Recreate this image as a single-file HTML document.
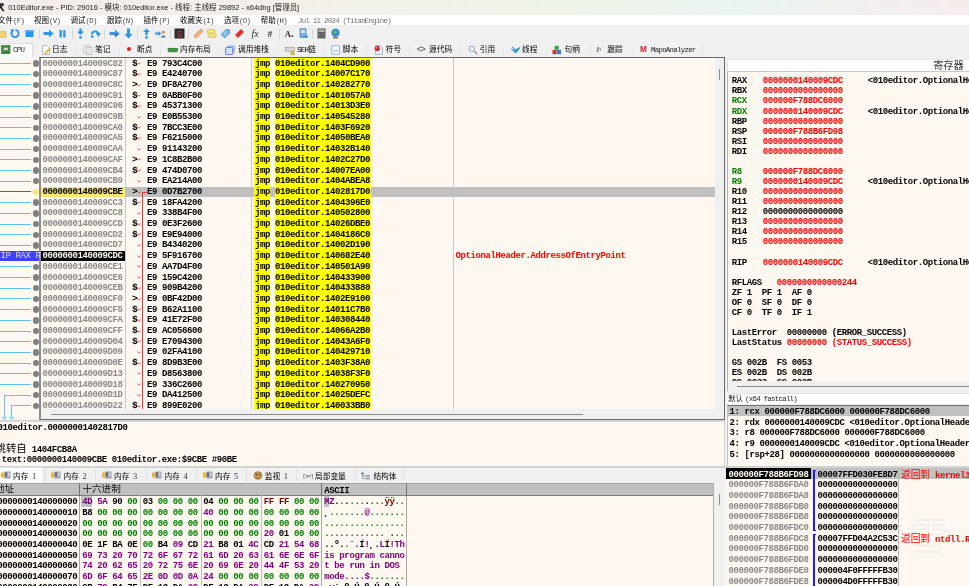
<!DOCTYPE html>
<html lang="zh-CN"><head><meta charset="utf-8"><title>x64dbg</title>
<style>
html,body{margin:0;padding:0;}
body{width:969px;height:586px;overflow:hidden;position:relative;background:#f0f0f0;font-family:"Liberation Sans","Noto Sans CJK SC",sans-serif;}
#root{position:absolute;left:0;top:0;width:969px;height:586px;overflow:hidden;will-change:transform;}
#root div,#root span,#root svg{position:absolute;}
#root span span{position:static;}
span{white-space:pre;line-height:12px;height:12px;}
.m{font-family:"Liberation Mono","DejaVu Sans Mono",monospace;font-size:9.0px;font-weight:bold;color:#000;letter-spacing:-0.4px;}
.g{color:#8a8a8a;}
.r{color:#ff0000;}
.gr{color:#008000;}
.pu{color:#800080;}
.s{font-family:"Liberation Sans","Noto Sans CJK SC",sans-serif;font-size:7.7px;color:#000;}
.ml{font-family:"Liberation Mono",monospace;font-size:7.4px;letter-spacing:-0.72px;}
.dr{color:#800000;}
.sd{font-family:"Liberation Serif",serif;font-size:8.4px;color:#334;margin-left:1.6px;}
.c{font-family:"Liberation Mono","Noto Sans CJK SC",monospace;}
</style></head><body><div id="root">

<div style="left:0.00px;top:0.00px;width:969.00px;height:14.60px;background:linear-gradient(90deg,#f4ece8 0%,#f3f0ea 30%,#eef4e8 58%,#eaf4f0 78%,#f3eeee 92%,#f7ecec 100%);"></div>
<svg style="left:-5px;top:2px" width="10" height="10" viewBox="0 0 10 10"><path d="M5 1 L8 9 M8 1 L5 5 L9 9 M6 3 H9" stroke="#222" stroke-width="1.3" fill="none"/></svg>
<span class="s" style="left:8.20px;top:1.60px;font-size:7.47px;color:#1a1a1a">010Editor.exe - PID: 29016 - 模块: 010editor.exe - 线程: 主线程 29892 - x64dbg [管理员]</span>
<div style="left:0.00px;top:14.60px;width:969.00px;height:10.90px;background:#ffffff;"></div>
<span class="s" style="left:-2.00px;top:14.70px;font-size:7.5px;">文件<span class="ml" style="color:#444">(F)</span></span>
<span class="s" style="left:34.00px;top:14.70px;font-size:7.5px;">视图<span class="ml" style="color:#444">(V)</span></span>
<span class="s" style="left:70.50px;top:14.70px;font-size:7.5px;">调试<span class="ml" style="color:#444">(D)</span></span>
<span class="s" style="left:107.00px;top:14.70px;font-size:7.5px;">跟踪<span class="ml" style="color:#444">(N)</span></span>
<span class="s" style="left:143.50px;top:14.70px;font-size:7.5px;">插件<span class="ml" style="color:#444">(P)</span></span>
<span class="s" style="left:180.00px;top:14.70px;font-size:7.5px;">收藏夹<span class="ml" style="color:#444">(I)</span></span>
<span class="s" style="left:224.00px;top:14.70px;font-size:7.5px;">选项<span class="ml" style="color:#444">(O)</span></span>
<span class="s" style="left:260.80px;top:14.70px;font-size:7.5px;">帮助<span class="ml" style="color:#444">(H)</span></span>
<span class="ml" style="left:298.00px;top:14.70px;color:#707070">Jul 11 2024 (TitanEngine)</span>
<div style="left:0.00px;top:25.50px;width:969.00px;height:16.20px;background:#f0f0f0;"></div>
<div style="left:0.00px;top:41.50px;width:969.00px;height:0.80px;background:#dcdcdc;"></div>
<svg style="left:-4.00px;top:28.10px" width="11" height="11" viewBox="0 0 11 11"><path d="M0 2.5 H4 L5 3.5 H10 V9.5 H0 Z" fill="#f2d27c" stroke="#d8b050" stroke-width="0.6"/></svg>
<svg style="left:10.10px;top:28.10px" width="11" height="11" viewBox="0 0 11 11"><path d="M2.2 3.2 A3.6 3.6 0 1 0 5.5 1.9" stroke="#2a96ee" stroke-width="1.9" fill="none"/><path d="M0.6 1.2 L4.6 1.6 L2.2 5 Z" fill="#2a96ee"/></svg>
<svg style="left:24.10px;top:28.10px" width="11" height="11" viewBox="0 0 11 11"><rect x="1.5" y="2" width="8" height="7" fill="#2a96ee"/><rect x="1.5" y="2" width="8" height="2" fill="#55a8f5"/></svg>
<svg style="left:42.60px;top:28.10px" width="11" height="11" viewBox="0 0 11 11"><path d="M0.5 4 H6 V1.5 L10.5 5.5 L6 9.5 V7 H0.5 Z" fill="#2a96ee"/></svg>
<svg style="left:56.70px;top:28.10px" width="11" height="11" viewBox="0 0 11 11"><rect x="2.5" y="2" width="2.3" height="7.5" fill="#2a96ee"/><rect x="6.2" y="2" width="2.3" height="7.5" fill="#2a96ee"/></svg>
<svg style="left:75.20px;top:28.10px" width="11" height="11" viewBox="0 0 11 11"><path d="M4.3 0.5 H6.7 V3.5 H9 L5.5 7 L2 3.5 H4.3 Z" fill="#2a96ee"/><circle cx="5.5" cy="9.3" r="1.4" fill="#2a96ee"/></svg>
<svg style="left:89.70px;top:28.10px" width="11" height="11" viewBox="0 0 11 11"><path d="M1.8 6.5 A3.4 3.4 0 0 1 8.2 5.2" stroke="#2a96ee" stroke-width="1.9" fill="none"/><path d="M5.6 5 H10.8 L8.6 9 Z" fill="#2a96ee"/><circle cx="2.2" cy="8.6" r="1.4" fill="#2a96ee"/></svg>
<svg style="left:108.50px;top:28.10px" width="11" height="11" viewBox="0 0 11 11"><path d="M0.5 4 H6 V1.5 L10.5 5.5 L6 9.5 V7 H0.5 Z" fill="#3a94ea"/><path d="M0.5 7 H6 V9.5 L10.5 5.5" fill="#1f6fc4"/></svg>
<svg style="left:122.80px;top:28.10px" width="11" height="11" viewBox="0 0 11 11"><path d="M4 0.5 H7 V6 H9.5 L5.5 10.5 L1.5 6 H4 Z" fill="#2a96ee"/></svg>
<svg style="left:141.10px;top:28.10px" width="11" height="11" viewBox="0 0 11 11"><path d="M4.3 7 H6.7 V4 H9 L5.5 0.5 L2 4 H4.3 Z" fill="#2a96ee"/><circle cx="5.5" cy="9.3" r="1.4" fill="#2a96ee"/></svg>
<svg style="left:155.40px;top:28.10px" width="11" height="11" viewBox="0 0 11 11"><path d="M0 4.6 H3.5 V3 L6.3 5.5 L3.5 8 V6.4 H0 Z" fill="#2a96ee"/><circle cx="8.3" cy="4.2" r="1.6" fill="#c8965a"/><path d="M5.8 9.5 Q8.3 5 10.8 9.5 Z" fill="#5a7aa8"/></svg>
<svg style="left:173.70px;top:28.10px" width="11" height="11" viewBox="0 0 11 11"><rect x="0.5" y="0.5" width="10" height="10" fill="#2e2a2a"/><text x="5.5" y="8.6" font-family="Liberation Sans,sans-serif" font-size="8.5" text-anchor="middle" fill="#e04050">S</text></svg>
<svg style="left:192.50px;top:28.10px" width="11" height="11" viewBox="0 0 11 11"><path d="M1.5 7 L7 1.5 A1.8 1.8 0 0 1 9.5 4 L4 9.5 A1.8 1.8 0 0 1 1.5 7 Z" fill="#eeb080" stroke="#d89060" stroke-width="0.6"/></svg>
<svg style="left:206.30px;top:28.10px" width="11" height="11" viewBox="0 0 11 11"><rect x="1" y="1.5" width="8" height="3.6" rx="0.8" fill="#f4e48c" stroke="#d0b040" stroke-width="0.6"/><rect x="2" y="5.8" width="8" height="3.6" rx="0.8" fill="#f4e48c" stroke="#d0b040" stroke-width="0.6"/></svg>
<svg style="left:220.10px;top:28.10px" width="11" height="11" viewBox="0 0 11 11"><path d="M1 6.5 L6 1.5 L9.5 1.8 L9.8 5 L4.8 10 Z" fill="#6ab0e8" stroke="#3a80c0" stroke-width="0.6"/><path d="M3 6.5 L6.5 3 M4.5 8 L8 4.5" stroke="#fff" stroke-width="0.7"/></svg>
<svg style="left:234.10px;top:28.10px" width="11" height="11" viewBox="0 0 11 11"><path d="M1 7 L7 1 L10 4 L4 10 Z" fill="#e03030"/><path d="M1 7 L4 10 L1.5 10.5 Z" fill="#f8d0a0"/></svg>
<span class="s" style="left:251.50px;top:27.60px;font-family:'Liberation Serif',serif;font-size:10px;color:#333"><i>fx</i></span>
<span class="s" style="left:267.50px;top:27.60px;font-family:'Liberation Sans',sans-serif;font-size:8.5px;font-weight:bold;color:#333"><i>#</i></span>
<span class="s" style="left:284.80px;top:27.90px;font-family:'Liberation Serif',serif;font-size:8.5px;font-weight:bold;color:#333">A<span style="font-size:5px">a</span></span>
<svg style="left:297.70px;top:28.10px" width="11" height="11" viewBox="0 0 11 11"><rect x="2" y="0.8" width="6" height="8.5" fill="#7ab0e0" stroke="#3a70b0" stroke-width="0.6"/><rect x="3" y="2" width="4" height="3" fill="#d8e8f8"/><path d="M5 8.5 H10 M8 7 L10 8.5 L8 10" stroke="#2a96ee" stroke-width="1" fill="none"/></svg>
<svg style="left:315.90px;top:28.10px" width="11" height="11" viewBox="0 0 11 11"><rect x="1.5" y="0.5" width="8" height="10" fill="#585858"/><rect x="2.5" y="1.5" width="6" height="2.5" fill="#a8b8a8"/><path d="M2.5 5.5 H8.5 M2.5 7.3 H8.5 M2.5 9.1 H8.5" stroke="#909090" stroke-width="0.9" stroke-dasharray="1.4 0.9"/></svg>
<svg style="left:330.20px;top:28.10px" width="11" height="11" viewBox="0 0 11 11"><circle cx="5.5" cy="4.8" r="4.2" fill="#3a8ae0"/><path d="M3 3 Q5 1.5 6.5 3.2 Q7.5 5 5.5 6 Q3.5 6.5 3 4.8 Z" fill="#58b858"/><rect x="3" y="9.2" width="5" height="1.4" fill="#a06838"/></svg>
<div style="left:38.80px;top:29.00px;width:0.80px;height:9.50px;background:#d6d6d6;"></div>
<div style="left:72.00px;top:29.00px;width:0.80px;height:9.50px;background:#d6d6d6;"></div>
<div style="left:104.00px;top:29.00px;width:0.80px;height:9.50px;background:#d6d6d6;"></div>
<div style="left:137.30px;top:29.00px;width:0.80px;height:9.50px;background:#d6d6d6;"></div>
<div style="left:170.00px;top:29.00px;width:0.80px;height:9.50px;background:#d6d6d6;"></div>
<div style="left:187.60px;top:29.00px;width:0.80px;height:9.50px;background:#d6d6d6;"></div>
<div style="left:278.80px;top:29.00px;width:0.80px;height:9.50px;background:#d6d6d6;"></div>
<div style="left:312.00px;top:29.00px;width:0.80px;height:9.50px;background:#d6d6d6;"></div>
<div style="left:0.00px;top:42.30px;width:969.00px;height:15.00px;background:#f0f0f0;"></div>
<div style="left:-3.00px;top:43.00px;width:36.00px;height:14.30px;background:#fbfbfb;border:1px solid #dedede;border-bottom:none;box-sizing:border-box;"></div>
<svg style="left:0.80px;top:44.70px" width="10" height="10" viewBox="0 0 10 10"><rect x="0.5" y="0.5" width="8.5" height="8" fill="#3c9a3c" stroke="#2a6a2a" stroke-width="0.6"/><rect x="2.2" y="2.2" width="5" height="3.4" fill="#d8d8d8" stroke="#444" stroke-width="0.5"/><path d="M1.5 7.5 H8" stroke="#1a4a1a" stroke-width="0.8" stroke-dasharray="1 0.7"/></svg>
<span class="ml" style="left:13.00px;top:44.30px;color:#222">CPU</span>
<svg style="left:40.50px;top:45.30px" width="10" height="10" viewBox="0 0 10 10"><path d="M1.5 0.5 H6 L8.5 3 V9.5 H1.5 Z" fill="#fafafa" stroke="#9aa" stroke-width="0.7"/><path d="M3.5 8 L8.5 3 L9.5 4 L4.5 9 Z" fill="#e8c040" stroke="#a88020" stroke-width="0.4"/></svg>
<span class="s" style="left:52.00px;top:44.30px;">日志</span>
<svg style="left:82.50px;top:45.30px" width="10" height="10" viewBox="0 0 10 10"><rect x="0.8" y="0.8" width="5.5" height="7" fill="#f4f4f4" stroke="#9aa" stroke-width="0.6"/><rect x="3.2" y="2.4" width="5.8" height="7" fill="#fafafa" stroke="#9aa" stroke-width="0.6"/><path d="M4.2 4.4 H8 M4.2 6 H8 M4.2 7.6 H8" stroke="#c8a8a8" stroke-width="0.5"/></svg>
<span class="s" style="left:95.00px;top:44.30px;">笔记</span>
<div style="left:127.20px;top:47.00px;width:4.00px;height:4.00px;background:#e02020;border-radius:50%"></div>
<span class="s" style="left:137.00px;top:44.30px;">断点</span>
<svg style="left:167.00px;top:45.30px" width="11" height="10" viewBox="0 0 11 10"><rect x="1" y="3.2" width="9.5" height="3.2" fill="#3a9a3a" stroke="#206020" stroke-width="0.5"/><path d="M1.5 7.0 H10" stroke="#206020" stroke-width="0.7" stroke-dasharray="0.8 0.6"/></svg>
<span class="s" style="left:180.00px;top:44.30px;">内存布局</span>
<svg style="left:225.00px;top:45.30px" width="10" height="10" viewBox="0 0 10 10"><rect x="2.8" y="0.6" width="7" height="7" rx="1.2" fill="#b9cdf6" stroke="#7f9fe8" stroke-width="0.6"/><rect x="0.6" y="2.4" width="7.2" height="7.2" rx="1.2" fill="#d4e0fb" stroke="#4a6fe0" stroke-width="0.9"/></svg>
<span class="s" style="left:238.00px;top:44.30px;">调用堆栈</span>
<svg style="left:284.50px;top:45.30px" width="10" height="10" viewBox="0 0 10 10"><rect x="0.5" y="2.2" width="9" height="4" fill="#d8d8d8" stroke="#888" stroke-width="0.5"/><path d="M5.5 9.5 L7.5 5.5 L9.5 9.5 Z" fill="#f0c020" stroke="#a07800" stroke-width="0.4"/></svg>
<span class="s" style="left:297.00px;top:44.30px;"><span class="ml">SEH</span>链</span>
<svg style="left:330.50px;top:45.30px" width="10" height="10" viewBox="0 0 10 10"><rect x="0.8" y="0.8" width="7.6" height="8.4" fill="#f4f8ff" stroke="#7a98c8" stroke-width="0.7"/><text x="4.6" y="6.6" font-size="4" text-anchor="middle" font-family="Liberation Mono,monospace" fill="#555">&lt;&gt;</text></svg>
<span class="s" style="left:342.70px;top:44.30px;">脚本</span>
<svg style="left:373.50px;top:45.30px" width="10" height="10" viewBox="0 0 10 10"><path d="M1.5 0.5 H6 L8.5 3 V9.5 H1.5 Z" fill="#e8eefc" stroke="#9aa" stroke-width="0.7"/><circle cx="3.2" cy="3.4" r="2.6" fill="#d02828"/><circle cx="2.5" cy="2.7" r="0.9" fill="#f8a0a0"/></svg>
<span class="s" style="left:385.80px;top:44.30px;">符号</span>
<span class="ml" style="left:416.80px;top:44.00px;font-size:8.4px;color:#444;letter-spacing:-1.1px">&lt;&gt;</span>
<span class="s" style="left:429.00px;top:44.30px;">源代码</span>
<svg style="left:467.50px;top:45.30px" width="10" height="10" viewBox="0 0 10 10"><circle cx="3.8" cy="3.8" r="2.8" fill="#eef4fa" stroke="#8a98a8" stroke-width="0.9"/><path d="M6 6 L9.3 9.3" stroke="#8a98a8" stroke-width="1.3"/></svg>
<span class="s" style="left:479.80px;top:44.30px;">引用</span>
<svg style="left:510.00px;top:45.30px" width="11" height="10" viewBox="0 0 11 10"><path d="M0.5 3 L5 5 L10.5 1.5 L8 6 L5.5 8.5 L3.5 6.5 Z" fill="#3a9ae8"/><path d="M2 2 L6 5 L9.5 3.5" stroke="#1a6ab8" stroke-width="0.8" fill="none"/></svg>
<span class="s" style="left:522.00px;top:44.30px;">线程</span>
<svg style="left:552.30px;top:45.30px" width="10" height="10" viewBox="0 0 10 10"><rect x="0.5" y="5" width="4" height="4.2" fill="#d03030"/><rect x="4.8" y="5" width="4.2" height="4.2" fill="#3a78d8"/><rect x="2.6" y="0.8" width="4.2" height="4" fill="#38a838"/></svg>
<span class="s" style="left:564.50px;top:44.30px;">句柄</span>
<span class="ml" style="left:596.50px;top:43.80px;font-size:7px;color:#555;font-family:'DejaVu Sans',sans-serif">ℓ<span style="font-size:4px;vertical-align:top">3</span></span>
<span class="s" style="left:607.20px;top:44.30px;">跟踪</span>
<span class="s" style="left:640.00px;top:44.30px;font-weight:bold;color:#e02020;font-size:8.2px">M</span>
<span class="ml" style="left:651.00px;top:44.30px;color:#222">MapoAnalyzer</span>
<div style="left:33.00px;top:44.50px;width:0.70px;height:11.50px;background:#e6e6e6;"></div>
<div style="left:74.50px;top:44.50px;width:0.70px;height:11.50px;background:#e6e6e6;"></div>
<div style="left:119.00px;top:44.50px;width:0.70px;height:11.50px;background:#e6e6e6;"></div>
<div style="left:160.00px;top:44.50px;width:0.70px;height:11.50px;background:#e6e6e6;"></div>
<div style="left:218.00px;top:44.50px;width:0.70px;height:11.50px;background:#e6e6e6;"></div>
<div style="left:277.00px;top:44.50px;width:0.70px;height:11.50px;background:#e6e6e6;"></div>
<div style="left:323.00px;top:44.50px;width:0.70px;height:11.50px;background:#e6e6e6;"></div>
<div style="left:366.00px;top:44.50px;width:0.70px;height:11.50px;background:#e6e6e6;"></div>
<div style="left:408.50px;top:44.50px;width:0.70px;height:11.50px;background:#e6e6e6;"></div>
<div style="left:459.00px;top:44.50px;width:0.70px;height:11.50px;background:#e6e6e6;"></div>
<div style="left:503.00px;top:44.50px;width:0.70px;height:11.50px;background:#e6e6e6;"></div>
<div style="left:546.00px;top:44.50px;width:0.70px;height:11.50px;background:#e6e6e6;"></div>
<div style="left:590.00px;top:44.50px;width:0.70px;height:11.50px;background:#e6e6e6;"></div>
<div style="left:631.50px;top:44.50px;width:0.70px;height:11.50px;background:#e6e6e6;"></div>
<div style="left:702.30px;top:44.50px;width:0.70px;height:11.50px;background:#e6e6e6;"></div>
<div style="left:0.00px;top:57.30px;width:39.00px;height:362.00px;background:#fff8f0;"></div>
<div style="left:38.50px;top:57.20px;width:686.60px;height:362.40px;background:#fff8f0;border:1px solid #686868;border-left:2.1px solid #8e8e8e;box-sizing:border-box;"></div>
<div style="left:125.20px;top:58.20px;width:0.80px;height:351.00px;background:#c8c8c8;"></div>
<div style="left:250.60px;top:58.20px;width:0.80px;height:351.00px;background:#c8c8c8;"></div>
<div style="left:453.30px;top:58.20px;width:0.80px;height:351.00px;background:#c8c8c8;"></div>
<div style="left:40.60px;top:186.57px;width:674.00px;height:10.70px;background:#c0c0c0;"></div>
<div style="left:40.60px;top:186.57px;width:84.60px;height:10.70px;background:#ffe66e;"></div>
<div style="left:40.60px;top:250.77px;width:84.60px;height:10.70px;background:#000000;"></div>
<div style="left:0.00px;top:63.02px;width:31.30px;height:1.00px;background:#5cc6f2;"></div>
<div style="left:32.50px;top:60.32px;width:6.40px;height:6.40px;background:#808080;border-radius:50%"></div>
<div style="left:0.00px;top:73.72px;width:31.30px;height:1.00px;background:#5cc6f2;"></div>
<div style="left:32.50px;top:71.02px;width:6.40px;height:6.40px;background:#808080;border-radius:50%"></div>
<div style="left:0.00px;top:84.42px;width:31.30px;height:1.00px;background:#5cc6f2;"></div>
<div style="left:32.50px;top:81.72px;width:6.40px;height:6.40px;background:#808080;border-radius:50%"></div>
<div style="left:0.00px;top:95.12px;width:31.30px;height:1.00px;background:#5cc6f2;"></div>
<div style="left:32.50px;top:92.42px;width:6.40px;height:6.40px;background:#808080;border-radius:50%"></div>
<div style="left:0.00px;top:105.82px;width:31.30px;height:1.00px;background:#5cc6f2;"></div>
<div style="left:32.50px;top:103.12px;width:6.40px;height:6.40px;background:#808080;border-radius:50%"></div>
<div style="left:0.00px;top:116.52px;width:31.30px;height:1.00px;background:#5cc6f2;"></div>
<div style="left:32.50px;top:113.82px;width:6.40px;height:6.40px;background:#808080;border-radius:50%"></div>
<div style="left:0.00px;top:127.22px;width:31.30px;height:1.00px;background:#5cc6f2;"></div>
<div style="left:32.50px;top:124.52px;width:6.40px;height:6.40px;background:#808080;border-radius:50%"></div>
<div style="left:0.00px;top:137.92px;width:31.30px;height:1.00px;background:#5cc6f2;"></div>
<div style="left:32.50px;top:135.22px;width:6.40px;height:6.40px;background:#808080;border-radius:50%"></div>
<div style="left:0.00px;top:148.62px;width:31.30px;height:1.00px;background:#5cc6f2;"></div>
<div style="left:32.50px;top:145.92px;width:6.40px;height:6.40px;background:#808080;border-radius:50%"></div>
<div style="left:0.00px;top:159.32px;width:31.30px;height:1.00px;background:#5cc6f2;"></div>
<div style="left:32.50px;top:156.62px;width:6.40px;height:6.40px;background:#808080;border-radius:50%"></div>
<div style="left:0.00px;top:170.02px;width:31.30px;height:1.00px;background:#5cc6f2;"></div>
<div style="left:32.50px;top:167.32px;width:6.40px;height:6.40px;background:#808080;border-radius:50%"></div>
<div style="left:0.00px;top:180.72px;width:31.30px;height:1.00px;background:#5cc6f2;"></div>
<div style="left:32.50px;top:178.02px;width:6.40px;height:6.40px;background:#808080;border-radius:50%"></div>
<div style="left:0.00px;top:191.42px;width:31.30px;height:1.00px;background:#ff2020;"></div>
<div style="left:32.50px;top:188.72px;width:6.40px;height:6.40px;background:#ffe680;border-radius:50%"></div>
<div style="left:0.00px;top:202.12px;width:31.30px;height:1.00px;background:#5cc6f2;"></div>
<div style="left:32.50px;top:199.42px;width:6.40px;height:6.40px;background:#808080;border-radius:50%"></div>
<div style="left:0.00px;top:212.82px;width:31.30px;height:1.00px;background:#5cc6f2;"></div>
<div style="left:32.50px;top:210.12px;width:6.40px;height:6.40px;background:#808080;border-radius:50%"></div>
<div style="left:0.00px;top:223.52px;width:31.30px;height:1.00px;background:#5cc6f2;"></div>
<div style="left:32.50px;top:220.82px;width:6.40px;height:6.40px;background:#808080;border-radius:50%"></div>
<div style="left:0.00px;top:234.22px;width:31.30px;height:1.00px;background:#5cc6f2;"></div>
<div style="left:32.50px;top:231.52px;width:6.40px;height:6.40px;background:#808080;border-radius:50%"></div>
<div style="left:0.00px;top:244.92px;width:31.30px;height:1.00px;background:#5cc6f2;"></div>
<div style="left:32.50px;top:242.22px;width:6.40px;height:6.40px;background:#808080;border-radius:50%"></div>
<div style="left:0.00px;top:251.07px;width:38.60px;height:10.10px;background:#4040ff;"></div>
<span class="m" style="left:0.50px;top:250.12px;color:#dcdcff;font-weight:normal">IP RAX R</span>
<div style="left:0.00px;top:266.32px;width:31.30px;height:1.00px;background:#5cc6f2;"></div>
<div style="left:32.50px;top:263.62px;width:6.40px;height:6.40px;background:#808080;border-radius:50%"></div>
<div style="left:0.00px;top:277.02px;width:31.30px;height:1.00px;background:#5cc6f2;"></div>
<div style="left:32.50px;top:274.32px;width:6.40px;height:6.40px;background:#808080;border-radius:50%"></div>
<div style="left:0.00px;top:287.72px;width:31.30px;height:1.00px;background:#5cc6f2;"></div>
<div style="left:32.50px;top:285.02px;width:6.40px;height:6.40px;background:#808080;border-radius:50%"></div>
<div style="left:0.00px;top:298.42px;width:31.30px;height:1.00px;background:#5cc6f2;"></div>
<div style="left:32.50px;top:295.72px;width:6.40px;height:6.40px;background:#808080;border-radius:50%"></div>
<div style="left:0.00px;top:309.12px;width:31.30px;height:1.00px;background:#5cc6f2;"></div>
<div style="left:32.50px;top:306.42px;width:6.40px;height:6.40px;background:#808080;border-radius:50%"></div>
<div style="left:0.00px;top:319.82px;width:31.30px;height:1.00px;background:#5cc6f2;"></div>
<div style="left:32.50px;top:317.12px;width:6.40px;height:6.40px;background:#808080;border-radius:50%"></div>
<div style="left:0.00px;top:330.52px;width:31.30px;height:1.00px;background:#5cc6f2;"></div>
<div style="left:32.50px;top:327.82px;width:6.40px;height:6.40px;background:#808080;border-radius:50%"></div>
<div style="left:0.00px;top:341.22px;width:31.30px;height:1.00px;background:#5cc6f2;"></div>
<div style="left:32.50px;top:338.52px;width:6.40px;height:6.40px;background:#808080;border-radius:50%"></div>
<div style="left:0.00px;top:351.92px;width:31.30px;height:1.00px;background:#5cc6f2;"></div>
<div style="left:32.50px;top:349.22px;width:6.40px;height:6.40px;background:#808080;border-radius:50%"></div>
<div style="left:0.00px;top:362.62px;width:31.30px;height:1.00px;background:#5cc6f2;"></div>
<div style="left:32.50px;top:359.92px;width:6.40px;height:6.40px;background:#808080;border-radius:50%"></div>
<div style="left:0.00px;top:373.32px;width:31.30px;height:1.00px;background:#5cc6f2;"></div>
<div style="left:32.50px;top:370.62px;width:6.40px;height:6.40px;background:#808080;border-radius:50%"></div>
<div style="left:0.00px;top:384.02px;width:31.30px;height:1.00px;background:#5cc6f2;"></div>
<div style="left:32.50px;top:381.32px;width:6.40px;height:6.40px;background:#808080;border-radius:50%"></div>
<div style="left:4.50px;top:394.72px;width:26.80px;height:1.00px;background:#5cc6f2;"></div>
<div style="left:32.50px;top:392.02px;width:6.40px;height:6.40px;background:#808080;border-radius:50%"></div>
<div style="left:11.50px;top:405.42px;width:19.80px;height:1.00px;background:#5cc6f2;"></div>
<div style="left:32.50px;top:402.72px;width:6.40px;height:6.40px;background:#808080;border-radius:50%"></div>
<div style="left:3.90px;top:394.62px;width:1.50px;height:23.38px;background:#5cc6f2;"></div>
<div style="left:10.90px;top:405.32px;width:1.50px;height:12.68px;background:#5cc6f2;"></div>
<svg style="left:1.1px;top:415.8px" width="14" height="4" viewBox="0 0 14 4"><path d="M1.2 0.8 L3.5 3.4 L5.8 0.8 M8.2 0.8 L10.5 3.4 L12.8 0.8" stroke="#5cc6f2" stroke-width="1" fill="none"/></svg>
<div style="left:142.00px;top:191.92px;width:0.90px;height:217.08px;background:#ff3030;"></div>
<div style="left:142.00px;top:191.52px;width:4.50px;height:0.90px;background:#ff3030;"></div>
<div style="left:254.30px;top:58.17px;width:15.70px;height:10.90px;background:#ffff00;"></div>
<div style="left:274.70px;top:58.17px;width:96.30px;height:10.90px;background:#ffff00;"></div>
<div style="left:254.30px;top:68.87px;width:15.70px;height:10.90px;background:#ffff00;"></div>
<div style="left:274.70px;top:68.87px;width:96.30px;height:10.90px;background:#ffff00;"></div>
<div style="left:254.30px;top:79.57px;width:15.70px;height:10.90px;background:#ffff00;"></div>
<div style="left:274.70px;top:79.57px;width:96.30px;height:10.90px;background:#ffff00;"></div>
<div style="left:254.30px;top:90.27px;width:15.70px;height:10.90px;background:#ffff00;"></div>
<div style="left:274.70px;top:90.27px;width:96.30px;height:10.90px;background:#ffff00;"></div>
<div style="left:254.30px;top:100.97px;width:15.70px;height:10.90px;background:#ffff00;"></div>
<div style="left:274.70px;top:100.97px;width:96.30px;height:10.90px;background:#ffff00;"></div>
<div style="left:254.30px;top:111.67px;width:15.70px;height:10.90px;background:#ffff00;"></div>
<div style="left:274.70px;top:111.67px;width:96.30px;height:10.90px;background:#ffff00;"></div>
<div style="left:254.30px;top:122.37px;width:15.70px;height:10.90px;background:#ffff00;"></div>
<div style="left:274.70px;top:122.37px;width:96.30px;height:10.90px;background:#ffff00;"></div>
<div style="left:254.30px;top:133.07px;width:15.70px;height:10.90px;background:#ffff00;"></div>
<div style="left:274.70px;top:133.07px;width:96.30px;height:10.90px;background:#ffff00;"></div>
<div style="left:254.30px;top:143.77px;width:15.70px;height:10.90px;background:#ffff00;"></div>
<div style="left:274.70px;top:143.77px;width:96.30px;height:10.90px;background:#ffff00;"></div>
<div style="left:254.30px;top:154.47px;width:15.70px;height:10.90px;background:#ffff00;"></div>
<div style="left:274.70px;top:154.47px;width:96.30px;height:10.90px;background:#ffff00;"></div>
<div style="left:254.30px;top:165.17px;width:15.70px;height:10.90px;background:#ffff00;"></div>
<div style="left:274.70px;top:165.17px;width:96.30px;height:10.90px;background:#ffff00;"></div>
<div style="left:254.30px;top:175.87px;width:15.70px;height:10.90px;background:#ffff00;"></div>
<div style="left:274.70px;top:175.87px;width:96.30px;height:10.90px;background:#ffff00;"></div>
<div style="left:254.30px;top:186.57px;width:15.70px;height:10.90px;background:#ffff00;"></div>
<div style="left:274.70px;top:186.57px;width:96.30px;height:10.90px;background:#ffff00;"></div>
<div style="left:254.30px;top:197.27px;width:15.70px;height:10.90px;background:#ffff00;"></div>
<div style="left:274.70px;top:197.27px;width:96.30px;height:10.90px;background:#ffff00;"></div>
<div style="left:254.30px;top:207.97px;width:15.70px;height:10.90px;background:#ffff00;"></div>
<div style="left:274.70px;top:207.97px;width:96.30px;height:10.90px;background:#ffff00;"></div>
<div style="left:254.30px;top:218.67px;width:15.70px;height:10.90px;background:#ffff00;"></div>
<div style="left:274.70px;top:218.67px;width:96.30px;height:10.90px;background:#ffff00;"></div>
<div style="left:254.30px;top:229.37px;width:15.70px;height:10.90px;background:#ffff00;"></div>
<div style="left:274.70px;top:229.37px;width:96.30px;height:10.90px;background:#ffff00;"></div>
<div style="left:254.30px;top:240.07px;width:15.70px;height:10.90px;background:#ffff00;"></div>
<div style="left:274.70px;top:240.07px;width:96.30px;height:10.90px;background:#ffff00;"></div>
<div style="left:254.30px;top:250.77px;width:15.70px;height:10.90px;background:#ffff00;"></div>
<div style="left:274.70px;top:250.77px;width:96.30px;height:10.90px;background:#ffff00;"></div>
<div style="left:254.30px;top:261.47px;width:15.70px;height:10.90px;background:#ffff00;"></div>
<div style="left:274.70px;top:261.47px;width:96.30px;height:10.90px;background:#ffff00;"></div>
<div style="left:254.30px;top:272.17px;width:15.70px;height:10.90px;background:#ffff00;"></div>
<div style="left:274.70px;top:272.17px;width:96.30px;height:10.90px;background:#ffff00;"></div>
<div style="left:254.30px;top:282.87px;width:15.70px;height:10.90px;background:#ffff00;"></div>
<div style="left:274.70px;top:282.87px;width:96.30px;height:10.90px;background:#ffff00;"></div>
<div style="left:254.30px;top:293.57px;width:15.70px;height:10.90px;background:#ffff00;"></div>
<div style="left:274.70px;top:293.57px;width:96.30px;height:10.90px;background:#ffff00;"></div>
<div style="left:254.30px;top:304.27px;width:15.70px;height:10.90px;background:#ffff00;"></div>
<div style="left:274.70px;top:304.27px;width:96.30px;height:10.90px;background:#ffff00;"></div>
<div style="left:254.30px;top:314.97px;width:15.70px;height:10.90px;background:#ffff00;"></div>
<div style="left:274.70px;top:314.97px;width:96.30px;height:10.90px;background:#ffff00;"></div>
<div style="left:254.30px;top:325.67px;width:15.70px;height:10.90px;background:#ffff00;"></div>
<div style="left:274.70px;top:325.67px;width:96.30px;height:10.90px;background:#ffff00;"></div>
<div style="left:254.30px;top:336.37px;width:15.70px;height:10.90px;background:#ffff00;"></div>
<div style="left:274.70px;top:336.37px;width:96.30px;height:10.90px;background:#ffff00;"></div>
<div style="left:254.30px;top:347.07px;width:15.70px;height:10.90px;background:#ffff00;"></div>
<div style="left:274.70px;top:347.07px;width:96.30px;height:10.90px;background:#ffff00;"></div>
<div style="left:254.30px;top:357.77px;width:15.70px;height:10.90px;background:#ffff00;"></div>
<div style="left:274.70px;top:357.77px;width:96.30px;height:10.90px;background:#ffff00;"></div>
<div style="left:254.30px;top:368.47px;width:15.70px;height:10.90px;background:#ffff00;"></div>
<div style="left:274.70px;top:368.47px;width:96.30px;height:10.90px;background:#ffff00;"></div>
<div style="left:254.30px;top:379.17px;width:15.70px;height:10.90px;background:#ffff00;"></div>
<div style="left:274.70px;top:379.17px;width:96.30px;height:10.90px;background:#ffff00;"></div>
<div style="left:254.30px;top:389.87px;width:15.70px;height:10.90px;background:#ffff00;"></div>
<div style="left:274.70px;top:389.87px;width:96.30px;height:10.90px;background:#ffff00;"></div>
<div style="left:254.30px;top:400.57px;width:15.70px;height:10.90px;background:#ffff00;"></div>
<div style="left:274.70px;top:400.57px;width:96.30px;height:10.90px;background:#ffff00;"></div>
<span class="m g" style="left:42.60px;top:57.52px;">0000000140009C82</span>
<span class="m" style="left:132.00px;top:57.52px;font-size:9.6px">$</span>
<svg style="left:136.8px;top:62.12px" width="4" height="3" viewBox="0 0 4 3"><path d="M0.4 0.4 L2 2.2 L3.6 0.4" stroke="#ff3030" stroke-width="0.8" fill="none"/></svg>
<span class="m" style="left:147.00px;top:57.52px;">E9 793C4C00</span>
<span class="m" style="left:255.00px;top:57.52px;">jmp 010editor.1404CD900</span>
<span class="m g" style="left:42.60px;top:68.22px;">0000000140009C87</span>
<span class="m" style="left:132.00px;top:68.22px;font-size:9.6px">$</span>
<svg style="left:136.8px;top:72.82px" width="4" height="3" viewBox="0 0 4 3"><path d="M0.4 0.4 L2 2.2 L3.6 0.4" stroke="#ff3030" stroke-width="0.8" fill="none"/></svg>
<span class="m" style="left:147.00px;top:68.22px;">E9 E4240700</span>
<span class="m" style="left:255.00px;top:68.22px;">jmp 010editor.14007C170</span>
<span class="m g" style="left:42.60px;top:78.92px;">0000000140009C8C</span>
<span class="m" style="left:132.00px;top:78.92px;font-size:9.6px">&gt;</span>
<svg style="left:136.8px;top:83.52px" width="4" height="3" viewBox="0 0 4 3"><path d="M0.4 0.4 L2 2.2 L3.6 0.4" stroke="#ff3030" stroke-width="0.8" fill="none"/></svg>
<span class="m" style="left:147.00px;top:78.92px;">E9 DF8A2700</span>
<span class="m" style="left:255.00px;top:78.92px;">jmp 010editor.140282770</span>
<span class="m g" style="left:42.60px;top:89.62px;">0000000140009C91</span>
<span class="m" style="left:132.00px;top:89.62px;font-size:9.6px">$</span>
<svg style="left:136.8px;top:94.22px" width="4" height="3" viewBox="0 0 4 3"><path d="M0.4 0.4 L2 2.2 L3.6 0.4" stroke="#ff3030" stroke-width="0.8" fill="none"/></svg>
<span class="m" style="left:147.00px;top:89.62px;">E9 0ABB0F00</span>
<span class="m" style="left:255.00px;top:89.62px;">jmp 010editor.1401057A0</span>
<span class="m g" style="left:42.60px;top:100.32px;">0000000140009C96</span>
<span class="m" style="left:132.00px;top:100.32px;font-size:9.6px">$</span>
<svg style="left:136.8px;top:104.92px" width="4" height="3" viewBox="0 0 4 3"><path d="M0.4 0.4 L2 2.2 L3.6 0.4" stroke="#ff3030" stroke-width="0.8" fill="none"/></svg>
<span class="m" style="left:147.00px;top:100.32px;">E9 45371300</span>
<span class="m" style="left:255.00px;top:100.32px;">jmp 010editor.14013D3E0</span>
<span class="m g" style="left:42.60px;top:111.02px;">0000000140009C9B</span>
<svg style="left:136.8px;top:115.62px" width="4" height="3" viewBox="0 0 4 3"><path d="M0.4 0.4 L2 2.2 L3.6 0.4" stroke="#ff3030" stroke-width="0.8" fill="none"/></svg>
<span class="m" style="left:147.00px;top:111.02px;">E9 E0B55300</span>
<span class="m" style="left:255.00px;top:111.02px;">jmp 010editor.140545280</span>
<span class="m g" style="left:42.60px;top:121.72px;">0000000140009CA0</span>
<span class="m" style="left:132.00px;top:121.72px;font-size:9.6px">$</span>
<svg style="left:136.8px;top:126.32px" width="4" height="3" viewBox="0 0 4 3"><path d="M0.4 0.4 L2 2.2 L3.6 0.4" stroke="#ff3030" stroke-width="0.8" fill="none"/></svg>
<span class="m" style="left:147.00px;top:121.72px;">E9 7BCC3E00</span>
<span class="m" style="left:255.00px;top:121.72px;">jmp 010editor.1403F6920</span>
<span class="m g" style="left:42.60px;top:132.42px;">0000000140009CA5</span>
<span class="m" style="left:132.00px;top:132.42px;font-size:9.6px">$</span>
<svg style="left:136.8px;top:137.02px" width="4" height="3" viewBox="0 0 4 3"><path d="M0.4 0.4 L2 2.2 L3.6 0.4" stroke="#ff3030" stroke-width="0.8" fill="none"/></svg>
<span class="m" style="left:147.00px;top:132.42px;">E9 F6215000</span>
<span class="m" style="left:255.00px;top:132.42px;">jmp 010editor.14050BEA0</span>
<span class="m g" style="left:42.60px;top:143.12px;">0000000140009CAA</span>
<svg style="left:136.8px;top:147.72px" width="4" height="3" viewBox="0 0 4 3"><path d="M0.4 0.4 L2 2.2 L3.6 0.4" stroke="#ff3030" stroke-width="0.8" fill="none"/></svg>
<span class="m" style="left:147.00px;top:143.12px;">E9 91143200</span>
<span class="m" style="left:255.00px;top:143.12px;">jmp 010editor.14032B140</span>
<span class="m g" style="left:42.60px;top:153.82px;">0000000140009CAF</span>
<span class="m" style="left:132.00px;top:153.82px;font-size:9.6px">&gt;</span>
<svg style="left:136.8px;top:158.42px" width="4" height="3" viewBox="0 0 4 3"><path d="M0.4 0.4 L2 2.2 L3.6 0.4" stroke="#ff3030" stroke-width="0.8" fill="none"/></svg>
<span class="m" style="left:147.00px;top:153.82px;">E9 1C8B2B00</span>
<span class="m" style="left:255.00px;top:153.82px;">jmp 010editor.1402C27D0</span>
<span class="m g" style="left:42.60px;top:164.52px;">0000000140009CB4</span>
<span class="m" style="left:132.00px;top:164.52px;font-size:9.6px">$</span>
<svg style="left:136.8px;top:169.12px" width="4" height="3" viewBox="0 0 4 3"><path d="M0.4 0.4 L2 2.2 L3.6 0.4" stroke="#ff3030" stroke-width="0.8" fill="none"/></svg>
<span class="m" style="left:147.00px;top:164.52px;">E9 474D0700</span>
<span class="m" style="left:255.00px;top:164.52px;">jmp 010editor.14007EA00</span>
<span class="m g" style="left:42.60px;top:175.22px;">0000000140009CB9</span>
<svg style="left:136.8px;top:179.82px" width="4" height="3" viewBox="0 0 4 3"><path d="M0.4 0.4 L2 2.2 L3.6 0.4" stroke="#ff3030" stroke-width="0.8" fill="none"/></svg>
<span class="m" style="left:147.00px;top:175.22px;">E9 EA214A00</span>
<span class="m" style="left:255.00px;top:175.22px;">jmp 010editor.1404ABEA8</span>
<span class="m" style="left:42.60px;top:185.92px;">0000000140009CBE</span>
<span class="m" style="left:132.00px;top:185.92px;font-size:9.6px">&gt;</span>
<svg style="left:136.8px;top:190.52px" width="4" height="3" viewBox="0 0 4 3"><path d="M0.4 0.4 L2 2.2 L3.6 0.4" stroke="#ff3030" stroke-width="0.8" fill="none"/></svg>
<span class="m" style="left:147.00px;top:185.92px;">E9 0D7B2700</span>
<span class="m" style="left:255.00px;top:185.92px;">jmp 010editor.1402817D0</span>
<span class="m g" style="left:42.60px;top:196.62px;">0000000140009CC3</span>
<span class="m" style="left:132.00px;top:196.62px;font-size:9.6px">$</span>
<svg style="left:136.8px;top:201.22px" width="4" height="3" viewBox="0 0 4 3"><path d="M0.4 0.4 L2 2.2 L3.6 0.4" stroke="#ff3030" stroke-width="0.8" fill="none"/></svg>
<span class="m" style="left:147.00px;top:196.62px;">E9 18FA4200</span>
<span class="m" style="left:255.00px;top:196.62px;">jmp 010editor.1404396E0</span>
<span class="m g" style="left:42.60px;top:207.32px;">0000000140009CC8</span>
<svg style="left:136.8px;top:211.92px" width="4" height="3" viewBox="0 0 4 3"><path d="M0.4 0.4 L2 2.2 L3.6 0.4" stroke="#ff3030" stroke-width="0.8" fill="none"/></svg>
<span class="m" style="left:147.00px;top:207.32px;">E9 338B4F00</span>
<span class="m" style="left:255.00px;top:207.32px;">jmp 010editor.140502800</span>
<span class="m g" style="left:42.60px;top:218.02px;">0000000140009CCD</span>
<span class="m" style="left:132.00px;top:218.02px;font-size:9.6px">$</span>
<svg style="left:136.8px;top:222.62px" width="4" height="3" viewBox="0 0 4 3"><path d="M0.4 0.4 L2 2.2 L3.6 0.4" stroke="#ff3030" stroke-width="0.8" fill="none"/></svg>
<span class="m" style="left:147.00px;top:218.02px;">E9 0E3F2600</span>
<span class="m" style="left:255.00px;top:218.02px;">jmp 010editor.14026DBE0</span>
<span class="m g" style="left:42.60px;top:228.72px;">0000000140009CD2</span>
<span class="m" style="left:132.00px;top:228.72px;font-size:9.6px">$</span>
<svg style="left:136.8px;top:233.32px" width="4" height="3" viewBox="0 0 4 3"><path d="M0.4 0.4 L2 2.2 L3.6 0.4" stroke="#ff3030" stroke-width="0.8" fill="none"/></svg>
<span class="m" style="left:147.00px;top:228.72px;">E9 E9E94000</span>
<span class="m" style="left:255.00px;top:228.72px;">jmp 010editor.1404186C0</span>
<span class="m g" style="left:42.60px;top:239.42px;">0000000140009CD7</span>
<svg style="left:136.8px;top:244.02px" width="4" height="3" viewBox="0 0 4 3"><path d="M0.4 0.4 L2 2.2 L3.6 0.4" stroke="#ff3030" stroke-width="0.8" fill="none"/></svg>
<span class="m" style="left:147.00px;top:239.42px;">E9 B4340200</span>
<span class="m" style="left:255.00px;top:239.42px;">jmp 010editor.14002D190</span>
<span class="m" style="left:42.60px;top:250.12px;color:#fffbf0">0000000140009CDC</span>
<svg style="left:136.8px;top:254.72px" width="4" height="3" viewBox="0 0 4 3"><path d="M0.4 0.4 L2 2.2 L3.6 0.4" stroke="#ff3030" stroke-width="0.8" fill="none"/></svg>
<span class="m" style="left:147.00px;top:250.12px;">E9 5F916700</span>
<span class="m" style="left:255.00px;top:250.12px;">jmp 010editor.140682E40</span>
<span class="m r" style="left:455.60px;top:250.12px;">OptionalHeader.AddressOfEntryPoint</span>
<span class="m g" style="left:42.60px;top:260.82px;">0000000140009CE1</span>
<svg style="left:136.8px;top:265.42px" width="4" height="3" viewBox="0 0 4 3"><path d="M0.4 0.4 L2 2.2 L3.6 0.4" stroke="#ff3030" stroke-width="0.8" fill="none"/></svg>
<span class="m" style="left:147.00px;top:260.82px;">E9 AA7D4F00</span>
<span class="m" style="left:255.00px;top:260.82px;">jmp 010editor.140501A90</span>
<span class="m g" style="left:42.60px;top:271.52px;">0000000140009CE6</span>
<svg style="left:136.8px;top:276.12px" width="4" height="3" viewBox="0 0 4 3"><path d="M0.4 0.4 L2 2.2 L3.6 0.4" stroke="#ff3030" stroke-width="0.8" fill="none"/></svg>
<span class="m" style="left:147.00px;top:271.52px;">E9 159C4200</span>
<span class="m" style="left:255.00px;top:271.52px;">jmp 010editor.140433900</span>
<span class="m g" style="left:42.60px;top:282.22px;">0000000140009CEB</span>
<span class="m" style="left:132.00px;top:282.22px;font-size:9.6px">$</span>
<svg style="left:136.8px;top:286.82px" width="4" height="3" viewBox="0 0 4 3"><path d="M0.4 0.4 L2 2.2 L3.6 0.4" stroke="#ff3030" stroke-width="0.8" fill="none"/></svg>
<span class="m" style="left:147.00px;top:282.22px;">E9 909B4200</span>
<span class="m" style="left:255.00px;top:282.22px;">jmp 010editor.140433880</span>
<span class="m g" style="left:42.60px;top:292.92px;">0000000140009CF0</span>
<span class="m" style="left:132.00px;top:292.92px;font-size:9.6px">&gt;</span>
<svg style="left:136.8px;top:297.52px" width="4" height="3" viewBox="0 0 4 3"><path d="M0.4 0.4 L2 2.2 L3.6 0.4" stroke="#ff3030" stroke-width="0.8" fill="none"/></svg>
<span class="m" style="left:147.00px;top:292.92px;">E9 0BF42D00</span>
<span class="m" style="left:255.00px;top:292.92px;">jmp 010editor.1402E9100</span>
<span class="m g" style="left:42.60px;top:303.62px;">0000000140009CF5</span>
<span class="m" style="left:132.00px;top:303.62px;font-size:9.6px">$</span>
<svg style="left:136.8px;top:308.22px" width="4" height="3" viewBox="0 0 4 3"><path d="M0.4 0.4 L2 2.2 L3.6 0.4" stroke="#ff3030" stroke-width="0.8" fill="none"/></svg>
<span class="m" style="left:147.00px;top:303.62px;">E9 B62A1100</span>
<span class="m" style="left:255.00px;top:303.62px;">jmp 010editor.14011C7B0</span>
<span class="m g" style="left:42.60px;top:314.32px;">0000000140009CFA</span>
<span class="m" style="left:132.00px;top:314.32px;font-size:9.6px">$</span>
<svg style="left:136.8px;top:318.92px" width="4" height="3" viewBox="0 0 4 3"><path d="M0.4 0.4 L2 2.2 L3.6 0.4" stroke="#ff3030" stroke-width="0.8" fill="none"/></svg>
<span class="m" style="left:147.00px;top:314.32px;">E9 41E72F00</span>
<span class="m" style="left:255.00px;top:314.32px;">jmp 010editor.140308440</span>
<span class="m g" style="left:42.60px;top:325.02px;">0000000140009CFF</span>
<span class="m" style="left:132.00px;top:325.02px;font-size:9.6px">$</span>
<svg style="left:136.8px;top:329.62px" width="4" height="3" viewBox="0 0 4 3"><path d="M0.4 0.4 L2 2.2 L3.6 0.4" stroke="#ff3030" stroke-width="0.8" fill="none"/></svg>
<span class="m" style="left:147.00px;top:325.02px;">E9 AC056600</span>
<span class="m" style="left:255.00px;top:325.02px;">jmp 010editor.14066A2B0</span>
<span class="m g" style="left:42.60px;top:335.72px;">0000000140009D04</span>
<span class="m" style="left:132.00px;top:335.72px;font-size:9.6px">$</span>
<svg style="left:136.8px;top:340.32px" width="4" height="3" viewBox="0 0 4 3"><path d="M0.4 0.4 L2 2.2 L3.6 0.4" stroke="#ff3030" stroke-width="0.8" fill="none"/></svg>
<span class="m" style="left:147.00px;top:335.72px;">E9 E7094300</span>
<span class="m" style="left:255.00px;top:335.72px;">jmp 010editor.14043A6F0</span>
<span class="m g" style="left:42.60px;top:346.42px;">0000000140009D09</span>
<svg style="left:136.8px;top:351.02px" width="4" height="3" viewBox="0 0 4 3"><path d="M0.4 0.4 L2 2.2 L3.6 0.4" stroke="#ff3030" stroke-width="0.8" fill="none"/></svg>
<span class="m" style="left:147.00px;top:346.42px;">E9 02FA4100</span>
<span class="m" style="left:255.00px;top:346.42px;">jmp 010editor.140429710</span>
<span class="m g" style="left:42.60px;top:357.12px;">0000000140009D0E</span>
<span class="m" style="left:132.00px;top:357.12px;font-size:9.6px">$</span>
<svg style="left:136.8px;top:361.72px" width="4" height="3" viewBox="0 0 4 3"><path d="M0.4 0.4 L2 2.2 L3.6 0.4" stroke="#ff3030" stroke-width="0.8" fill="none"/></svg>
<span class="m" style="left:147.00px;top:357.12px;">E9 8D9B3E00</span>
<span class="m" style="left:255.00px;top:357.12px;">jmp 010editor.1403F38A0</span>
<span class="m g" style="left:42.60px;top:367.82px;">0000000140009D13</span>
<svg style="left:136.8px;top:372.42px" width="4" height="3" viewBox="0 0 4 3"><path d="M0.4 0.4 L2 2.2 L3.6 0.4" stroke="#ff3030" stroke-width="0.8" fill="none"/></svg>
<span class="m" style="left:147.00px;top:367.82px;">E9 D8563800</span>
<span class="m" style="left:255.00px;top:367.82px;">jmp 010editor.14038F3F0</span>
<span class="m g" style="left:42.60px;top:378.52px;">0000000140009D18</span>
<svg style="left:136.8px;top:383.12px" width="4" height="3" viewBox="0 0 4 3"><path d="M0.4 0.4 L2 2.2 L3.6 0.4" stroke="#ff3030" stroke-width="0.8" fill="none"/></svg>
<span class="m" style="left:147.00px;top:378.52px;">E9 336C2600</span>
<span class="m" style="left:255.00px;top:378.52px;">jmp 010editor.140270950</span>
<span class="m g" style="left:42.60px;top:389.22px;">0000000140009D1D</span>
<svg style="left:136.8px;top:393.82px" width="4" height="3" viewBox="0 0 4 3"><path d="M0.4 0.4 L2 2.2 L3.6 0.4" stroke="#ff3030" stroke-width="0.8" fill="none"/></svg>
<span class="m" style="left:147.00px;top:389.22px;">E9 DA412500</span>
<span class="m" style="left:255.00px;top:389.22px;">jmp 010editor.14025DEFC</span>
<span class="m g" style="left:42.60px;top:399.92px;">0000000140009D22</span>
<span class="m" style="left:132.00px;top:399.92px;font-size:9.6px">$</span>
<svg style="left:136.8px;top:404.52px" width="4" height="3" viewBox="0 0 4 3"><path d="M0.4 0.4 L2 2.2 L3.6 0.4" stroke="#ff3030" stroke-width="0.8" fill="none"/></svg>
<span class="m" style="left:147.00px;top:399.92px;">E9 899E0200</span>
<span class="m" style="left:255.00px;top:399.92px;">jmp 010editor.140033BB0</span>
<div style="left:714.60px;top:58.20px;width:9.60px;height:351.00px;background:#f0f0f0;"></div>
<div style="left:719.00px;top:69.00px;width:1.00px;height:11.00px;background:#8a8a8a;"></div>
<div style="left:40.60px;top:408.80px;width:683.60px;height:9.80px;background:#f0f0f0;"></div>
<div style="left:51.00px;top:413.70px;width:532.00px;height:0.90px;background:#8a8a8a;"></div>
<div style="left:0.00px;top:419.50px;width:725.00px;height:2.70px;background:#d6d6d6;"></div>
<div style="left:0.00px;top:422.20px;width:725.00px;height:44.00px;background:#fff8f0;"></div>
<div style="left:0.00px;top:466.10px;width:726.00px;height:1.50px;background:#d2d2d2;"></div>
<div style="left:724.40px;top:419.50px;width:1.00px;height:167.00px;background:#d0d0d0;"></div>
<span class="m" style="left:-2.60px;top:421.70px;">010editor.00000001402817D0</span>
<span class="m" style="left:-4.50px;top:442.70px;"><span class="s" style="font-size:10.4px;color:#000;font-weight:normal;letter-spacing:0">跳转自</span> 1404FCB8A</span>
<span class="m" style="left:-3.20px;top:454.20px;">.text:0000000140009CBE 010editor.exe:$9CBE #90BE</span>
<div style="left:0.00px;top:467.60px;width:726.00px;height:15.30px;background:#f0f0f0;"></div>
<div style="left:-6.00px;top:467.20px;width:50.00px;height:15.50px;background:#fbfbfb;border:1px solid #e0e0e0;border-bottom:none;box-sizing:border-box;"></div>
<svg style="left:0.5px;top:471.3px" width="10" height="8" viewBox="0 0 10 8"><rect x="0" y="1.5" width="3" height="5" fill="#e8b63a"/><rect x="3.2" y="0.5" width="6.3" height="7" fill="#9aa0a8"/><rect x="4.2" y="1.5" width="1.6" height="4" fill="#5a6068"/><rect x="6.8" y="1.5" width="1.6" height="4" fill="#d8dce0"/></svg>
<span class="s" style="left:13.00px;top:470.60px;">内存 <span class="sd">1</span></span>
<svg style="left:51.0px;top:471.3px" width="10" height="8" viewBox="0 0 10 8"><rect x="0" y="1.5" width="3" height="5" fill="#e8b63a"/><rect x="3.2" y="0.5" width="6.3" height="7" fill="#9aa0a8"/><rect x="4.2" y="1.5" width="1.6" height="4" fill="#5a6068"/><rect x="6.8" y="1.5" width="1.6" height="4" fill="#d8dce0"/></svg>
<span class="s" style="left:63.50px;top:470.60px;">内存 <span class="sd">2</span></span>
<div style="left:44.50px;top:469.00px;width:0.70px;height:12.00px;background:#e2e2e2;"></div>
<svg style="left:101.5px;top:471.3px" width="10" height="8" viewBox="0 0 10 8"><rect x="0" y="1.5" width="3" height="5" fill="#e8b63a"/><rect x="3.2" y="0.5" width="6.3" height="7" fill="#9aa0a8"/><rect x="4.2" y="1.5" width="1.6" height="4" fill="#5a6068"/><rect x="6.8" y="1.5" width="1.6" height="4" fill="#d8dce0"/></svg>
<span class="s" style="left:114.00px;top:470.60px;">内存 <span class="sd">3</span></span>
<div style="left:95.00px;top:469.00px;width:0.70px;height:12.00px;background:#e2e2e2;"></div>
<svg style="left:152.0px;top:471.3px" width="10" height="8" viewBox="0 0 10 8"><rect x="0" y="1.5" width="3" height="5" fill="#e8b63a"/><rect x="3.2" y="0.5" width="6.3" height="7" fill="#9aa0a8"/><rect x="4.2" y="1.5" width="1.6" height="4" fill="#5a6068"/><rect x="6.8" y="1.5" width="1.6" height="4" fill="#d8dce0"/></svg>
<span class="s" style="left:164.50px;top:470.60px;">内存 <span class="sd">4</span></span>
<div style="left:145.50px;top:469.00px;width:0.70px;height:12.00px;background:#e2e2e2;"></div>
<svg style="left:202.5px;top:471.3px" width="10" height="8" viewBox="0 0 10 8"><rect x="0" y="1.5" width="3" height="5" fill="#e8b63a"/><rect x="3.2" y="0.5" width="6.3" height="7" fill="#9aa0a8"/><rect x="4.2" y="1.5" width="1.6" height="4" fill="#5a6068"/><rect x="6.8" y="1.5" width="1.6" height="4" fill="#d8dce0"/></svg>
<span class="s" style="left:215.00px;top:470.60px;">内存 <span class="sd">5</span></span>
<div style="left:196.00px;top:469.00px;width:0.70px;height:12.00px;background:#e2e2e2;"></div>
<div style="left:245.50px;top:469.00px;width:0.70px;height:12.00px;background:#e2e2e2;"></div>
<svg style="left:252.5px;top:471px" width="10" height="9" viewBox="0 0 10 9"><circle cx="5" cy="4.5" r="3.8" fill="#d9a45a" stroke="#8a5a20" stroke-width="0.8"/><circle cx="3.6" cy="3.6" r="0.9" fill="#5a3a10"/><circle cx="6.4" cy="3.6" r="0.9" fill="#5a3a10"/><path d="M3.5 6 Q5 7.2 6.5 6" stroke="#5a3a10" stroke-width="0.7" fill="none"/></svg>
<span class="s" style="left:264.70px;top:470.60px;">监视 <span class="sd">1</span></span>
<div style="left:295.70px;top:469.00px;width:0.70px;height:12.00px;background:#e2e2e2;"></div>
<span class="ml" style="left:302.50px;top:470.60px;color:#555;font-size:5.6px">[x=]</span>
<span class="s" style="left:315.00px;top:470.60px;">局部变量</span>
<div style="left:354.60px;top:469.00px;width:0.70px;height:12.00px;background:#e2e2e2;"></div>
<svg style="left:360.5px;top:471.5px" width="10" height="8" viewBox="0 0 10 8"><circle cx="1.5" cy="1.5" r="1.2" fill="#3a78d8"/><path d="M1.5 2.5 V6.5 H5 M1.5 4 H5" stroke="#888" stroke-width="0.7" fill="none"/><rect x="5" y="3" width="4" height="2" fill="#aab" /><rect x="5" y="5.6" width="4" height="2" fill="#aab"/></svg>
<span class="s" style="left:373.40px;top:470.60px;">结构体</span>
<div style="left:403.20px;top:469.00px;width:0.70px;height:12.00px;background:#e2e2e2;"></div>
<div style="left:-2.00px;top:482.70px;width:727.00px;height:104.00px;background:#fff8f0;"></div>
<div style="left:-2.00px;top:482.70px;width:715.40px;height:13.00px;background:#c0c0c0;border-top:1px solid #a4a4a4;border-bottom:1px solid #7c7c7c;box-sizing:border-box;"></div>
<div style="left:78.60px;top:482.70px;width:0.90px;height:13.00px;background:#707070;"></div>
<div style="left:78.60px;top:495.70px;width:0.90px;height:91.00px;background:#a8a8a8;"></div>
<div style="left:320.90px;top:482.70px;width:0.90px;height:13.00px;background:#707070;"></div>
<div style="left:320.90px;top:495.70px;width:0.90px;height:91.00px;background:#a8a8a8;"></div>
<div style="left:406.30px;top:482.70px;width:0.90px;height:13.00px;background:#707070;"></div>
<div style="left:406.30px;top:495.70px;width:0.90px;height:91.00px;background:#a8a8a8;"></div>
<span class="s" style="left:-5.00px;top:483.20px;font-size:9.6px;color:#111">地址</span>
<span class="s" style="left:82.40px;top:483.20px;font-size:9.6px;color:#111">十六进制</span>
<span class="m" style="left:324.30px;top:484.60px;">ASCII</span>
<div style="left:713.40px;top:482.70px;width:10.60px;height:104.00px;background:#f0f0f0;border-left:1px solid #b0b0b0;box-sizing:border-box;"></div>
<div style="left:718.80px;top:493.70px;width:1.00px;height:11.50px;background:#8a8a8a;"></div>
<div style="left:81.20px;top:496.05px;width:11.20px;height:10.50px;background:#c0c0c0;"></div>
<div style="left:323.60px;top:496.05px;width:5.60px;height:10.50px;background:#c0c0c0;"></div>
<span class="m" style="left:-2.80px;top:496.20px;">0000000140000000</span>
<span class="m" style="left:82.20px;top:496.20px;"><span class="pu">4D</span> <span class="pu">5A</span> 90 <span class="gr">00</span></span>
<span class="m" style="left:142.75px;top:496.20px;">03 <span class="gr">00</span> <span class="gr">00</span> <span class="gr">00</span></span>
<span class="m" style="left:203.30px;top:496.20px;">04 <span class="gr">00</span> <span class="gr">00</span> <span class="gr">00</span></span>
<span class="m" style="left:263.85px;top:496.20px;"><span class="dr">FF</span> <span class="dr">FF</span> <span class="gr">00</span> <span class="gr">00</span></span>
<span class="m" style="left:324.30px;top:496.20px;"><span class="pu">M</span><span class="pu">Z</span>.<span class="gr">.</span>.<span class="gr">.</span><span class="gr">.</span><span class="gr">.</span>.<span class="gr">.</span><span class="gr">.</span><span class="gr">.</span><span class="dr">ÿ</span><span class="dr">ÿ</span><span class="gr">.</span><span class="gr">.</span></span>
<span class="m" style="left:-2.80px;top:506.90px;">0000000140000010</span>
<span class="m" style="left:82.20px;top:506.90px;">B8 <span class="gr">00</span> <span class="gr">00</span> <span class="gr">00</span></span>
<span class="m" style="left:142.75px;top:506.90px;"><span class="gr">00</span> <span class="gr">00</span> <span class="gr">00</span> <span class="gr">00</span></span>
<span class="m" style="left:203.30px;top:506.90px;"><span class="pu">40</span> <span class="gr">00</span> <span class="gr">00</span> <span class="gr">00</span></span>
<span class="m" style="left:263.85px;top:506.90px;"><span class="gr">00</span> <span class="gr">00</span> <span class="gr">00</span> <span class="gr">00</span></span>
<span class="m" style="left:324.30px;top:506.90px;">¸<span class="gr">.</span><span class="gr">.</span><span class="gr">.</span><span class="gr">.</span><span class="gr">.</span><span class="gr">.</span><span class="gr">.</span><span class="pu">@</span><span class="gr">.</span><span class="gr">.</span><span class="gr">.</span><span class="gr">.</span><span class="gr">.</span><span class="gr">.</span><span class="gr">.</span></span>
<span class="m" style="left:-2.80px;top:517.60px;">0000000140000020</span>
<span class="m" style="left:82.20px;top:517.60px;"><span class="gr">00</span> <span class="gr">00</span> <span class="gr">00</span> <span class="gr">00</span></span>
<span class="m" style="left:142.75px;top:517.60px;"><span class="gr">00</span> <span class="gr">00</span> <span class="gr">00</span> <span class="gr">00</span></span>
<span class="m" style="left:203.30px;top:517.60px;"><span class="gr">00</span> <span class="gr">00</span> <span class="gr">00</span> <span class="gr">00</span></span>
<span class="m" style="left:263.85px;top:517.60px;"><span class="gr">00</span> <span class="gr">00</span> <span class="gr">00</span> <span class="gr">00</span></span>
<span class="m" style="left:324.30px;top:517.60px;"><span class="gr">.</span><span class="gr">.</span><span class="gr">.</span><span class="gr">.</span><span class="gr">.</span><span class="gr">.</span><span class="gr">.</span><span class="gr">.</span><span class="gr">.</span><span class="gr">.</span><span class="gr">.</span><span class="gr">.</span><span class="gr">.</span><span class="gr">.</span><span class="gr">.</span><span class="gr">.</span></span>
<span class="m" style="left:-2.80px;top:528.30px;">0000000140000030</span>
<span class="m" style="left:82.20px;top:528.30px;"><span class="gr">00</span> <span class="gr">00</span> <span class="gr">00</span> <span class="gr">00</span></span>
<span class="m" style="left:142.75px;top:528.30px;"><span class="gr">00</span> <span class="gr">00</span> <span class="gr">00</span> <span class="gr">00</span></span>
<span class="m" style="left:203.30px;top:528.30px;"><span class="gr">00</span> <span class="gr">00</span> <span class="gr">00</span> <span class="gr">00</span></span>
<span class="m" style="left:263.85px;top:528.30px;"><span class="pu">20</span> 01 <span class="gr">00</span> <span class="gr">00</span></span>
<span class="m" style="left:324.30px;top:528.30px;"><span class="gr">.</span><span class="gr">.</span><span class="gr">.</span><span class="gr">.</span><span class="gr">.</span><span class="gr">.</span><span class="gr">.</span><span class="gr">.</span><span class="gr">.</span><span class="gr">.</span><span class="gr">.</span><span class="gr">.</span><span class="pu"> </span>.<span class="gr">.</span><span class="gr">.</span></span>
<span class="m" style="left:-2.80px;top:539.00px;">0000000140000040</span>
<span class="m" style="left:82.20px;top:539.00px;">0E 1F BA 0E</span>
<span class="m" style="left:142.75px;top:539.00px;"><span class="gr">00</span> B4 <span class="pu">09</span> CD</span>
<span class="m" style="left:203.30px;top:539.00px;"><span class="pu">21</span> B8 01 <span class="pu">4C</span></span>
<span class="m" style="left:263.85px;top:539.00px;">CD <span class="pu">21</span> <span class="pu">54</span> <span class="pu">68</span></span>
<span class="m" style="left:324.30px;top:539.00px;">..º.<span class="gr">.</span>´<span class="pu">.</span>Í<span class="pu">!</span>¸.<span class="pu">L</span>Í<span class="pu">!</span><span class="pu">T</span><span class="pu">h</span></span>
<span class="m" style="left:-2.80px;top:549.70px;">0000000140000050</span>
<span class="m" style="left:82.20px;top:549.70px;"><span class="pu">69</span> <span class="pu">73</span> <span class="pu">20</span> <span class="pu">70</span></span>
<span class="m" style="left:142.75px;top:549.70px;"><span class="pu">72</span> <span class="pu">6F</span> <span class="pu">67</span> <span class="pu">72</span></span>
<span class="m" style="left:203.30px;top:549.70px;"><span class="pu">61</span> <span class="pu">6D</span> <span class="pu">20</span> <span class="pu">63</span></span>
<span class="m" style="left:263.85px;top:549.70px;"><span class="pu">61</span> <span class="pu">6E</span> <span class="pu">6E</span> <span class="pu">6F</span></span>
<span class="m" style="left:324.30px;top:549.70px;"><span class="pu">i</span><span class="pu">s</span><span class="pu"> </span><span class="pu">p</span><span class="pu">r</span><span class="pu">o</span><span class="pu">g</span><span class="pu">r</span><span class="pu">a</span><span class="pu">m</span><span class="pu"> </span><span class="pu">c</span><span class="pu">a</span><span class="pu">n</span><span class="pu">n</span><span class="pu">o</span></span>
<span class="m" style="left:-2.80px;top:560.40px;">0000000140000060</span>
<span class="m" style="left:82.20px;top:560.40px;"><span class="pu">74</span> <span class="pu">20</span> <span class="pu">62</span> <span class="pu">65</span></span>
<span class="m" style="left:142.75px;top:560.40px;"><span class="pu">20</span> <span class="pu">72</span> <span class="pu">75</span> <span class="pu">6E</span></span>
<span class="m" style="left:203.30px;top:560.40px;"><span class="pu">20</span> <span class="pu">69</span> <span class="pu">6E</span> <span class="pu">20</span></span>
<span class="m" style="left:263.85px;top:560.40px;"><span class="pu">44</span> <span class="pu">4F</span> <span class="pu">53</span> <span class="pu">20</span></span>
<span class="m" style="left:324.30px;top:560.40px;"><span class="pu">t</span><span class="pu"> </span><span class="pu">b</span><span class="pu">e</span><span class="pu"> </span><span class="pu">r</span><span class="pu">u</span><span class="pu">n</span><span class="pu"> </span><span class="pu">i</span><span class="pu">n</span><span class="pu"> </span><span class="pu">D</span><span class="pu">O</span><span class="pu">S</span><span class="pu"> </span></span>
<span class="m" style="left:-2.80px;top:571.10px;">0000000140000070</span>
<span class="m" style="left:82.20px;top:571.10px;"><span class="pu">6D</span> <span class="pu">6F</span> <span class="pu">64</span> <span class="pu">65</span></span>
<span class="m" style="left:142.75px;top:571.10px;"><span class="pu">2E</span> <span class="pu">0D</span> <span class="pu">0D</span> <span class="pu">0A</span></span>
<span class="m" style="left:203.30px;top:571.10px;"><span class="pu">24</span> <span class="gr">00</span> <span class="gr">00</span> <span class="gr">00</span></span>
<span class="m" style="left:263.85px;top:571.10px;"><span class="gr">00</span> <span class="gr">00</span> <span class="gr">00</span> <span class="gr">00</span></span>
<span class="m" style="left:324.30px;top:571.10px;"><span class="pu">m</span><span class="pu">o</span><span class="pu">d</span><span class="pu">e</span><span class="pu">.</span><span class="pu">.</span><span class="pu">.</span><span class="pu">.</span><span class="pu">$</span><span class="gr">.</span><span class="gr">.</span><span class="gr">.</span><span class="gr">.</span><span class="gr">.</span><span class="gr">.</span><span class="gr">.</span></span>
<span class="m" style="left:-2.80px;top:581.80px;">0000000140000080</span>
<span class="m" style="left:82.20px;top:581.80px;">9B <span class="pu">79</span> B4 7F</span>
<span class="m" style="left:142.75px;top:581.80px;">DF 18 DA <span class="pu">2C</span></span>
<span class="m" style="left:203.30px;top:581.80px;">DF 18 DA <span class="pu">2C</span></span>
<span class="m" style="left:263.85px;top:581.80px;">DF 18 DA <span class="pu">2C</span></span>
<span class="m" style="left:324.30px;top:581.80px;">.<span class="pu">y</span>´.ß.Ú<span class="pu">,</span>ß.Ú<span class="pu">,</span>ß.Ú<span class="pu">,</span></span>
<div style="left:140.00px;top:495.30px;width:0.80px;height:91.00px;background:#c0c0c0;"></div>
<div style="left:200.50px;top:495.30px;width:0.80px;height:91.00px;background:#c0c0c0;"></div>
<div style="left:261.00px;top:495.30px;width:0.80px;height:91.00px;background:#c0c0c0;"></div>
<div style="left:726.80px;top:58.90px;width:243.00px;height:12.30px;background:#ffffff;border-top:1px solid #e6e6e6;border-left:1px solid #e6e6e6;box-sizing:border-box;"></div>
<span class="s" style="left:933.20px;top:59.50px;font-size:10.2px;color:#3a3a3a">寄存器</span>
<div style="left:726.80px;top:71.20px;width:243.00px;height:319.80px;background:#fff8f0;border-left:1px solid #b4b4b4;border-top:1.6px solid #c6c6c6;box-sizing:border-box;"></div>
<div style="left:727.8px;top:72.6px;width:241.2px;height:308.4px;overflow:hidden;background:transparent">
<div style="left:34.20px;top:2.70px;width:81.50px;height:10.00px;background:#eeeeee;"></div>
<span class="m " style="left:4.00px;top:2.70px;">RAX</span>
<span class="m r" style="left:35.00px;top:2.70px;">0000000140009CDC</span>
<span class="m" style="left:140.00px;top:2.70px;">&lt;010editor.OptionalHeader.AddressOfEntryPoint&gt;</span>
<span class="m " style="left:4.00px;top:12.77px;">RBX</span>
<span class="m r" style="left:35.00px;top:12.77px;">0000000000000000</span>
<span class="m gr" style="left:4.00px;top:22.84px;">RCX</span>
<span class="m r" style="left:35.00px;top:22.84px;">000000F788DC6000</span>
<span class="m gr" style="left:4.00px;top:32.91px;">RDX</span>
<span class="m r" style="left:35.00px;top:32.91px;">0000000140009CDC</span>
<span class="m" style="left:140.00px;top:32.91px;">&lt;010editor.OptionalHeader.AddressOfEntryPoint&gt;</span>
<span class="m " style="left:4.00px;top:42.98px;">RBP</span>
<span class="m r" style="left:35.00px;top:42.98px;">0000000000000000</span>
<span class="m " style="left:4.00px;top:53.05px;">RSP</span>
<span class="m r" style="left:35.00px;top:53.05px;">000000F788B6FD98</span>
<span class="m " style="left:4.00px;top:63.12px;">RSI</span>
<span class="m r" style="left:35.00px;top:63.12px;">0000000000000000</span>
<span class="m " style="left:4.00px;top:73.19px;">RDI</span>
<span class="m r" style="left:35.00px;top:73.19px;">0000000000000000</span>
<span class="m gr" style="left:4.00px;top:93.33px;">R8</span>
<span class="m r" style="left:35.00px;top:93.33px;">000000F788DC6000</span>
<span class="m gr" style="left:4.00px;top:103.40px;">R9</span>
<span class="m r" style="left:35.00px;top:103.40px;">0000000140009CDC</span>
<span class="m" style="left:140.00px;top:103.40px;">&lt;010editor.OptionalHeader.AddressOfEntryPoint&gt;</span>
<span class="m " style="left:4.00px;top:113.47px;">R10</span>
<span class="m r" style="left:35.00px;top:113.47px;">0000000000000000</span>
<span class="m " style="left:4.00px;top:123.54px;">R11</span>
<span class="m r" style="left:35.00px;top:123.54px;">0000000000000000</span>
<span class="m " style="left:4.00px;top:133.61px;">R12</span>
<span class="m " style="left:35.00px;top:133.61px;">0000000000000000</span>
<span class="m " style="left:4.00px;top:143.68px;">R13</span>
<span class="m r" style="left:35.00px;top:143.68px;">0000000000000000</span>
<span class="m " style="left:4.00px;top:153.75px;">R14</span>
<span class="m r" style="left:35.00px;top:153.75px;">0000000000000000</span>
<span class="m " style="left:4.00px;top:163.82px;">R15</span>
<span class="m r" style="left:35.00px;top:163.82px;">0000000000000000</span>
<span class="m " style="left:4.00px;top:183.96px;">RIP</span>
<span class="m r" style="left:35.00px;top:183.96px;">0000000140009CDC</span>
<span class="m" style="left:140.00px;top:183.96px;">&lt;010editor.OptionalHeader.AddressOfEntryPoint&gt;</span>
<span class="m" style="left:4.00px;top:204.10px;">RFLAGS   <span class="r">0000000000000244</span></span>
<span class="m" style="left:4.00px;top:214.17px;">ZF 1  PF 1  AF 0</span>
<span class="m" style="left:4.00px;top:224.24px;">OF 0  SF 0  DF 0</span>
<span class="m" style="left:4.00px;top:234.31px;">CF 0  TF 0  IF 1</span>
<span class="m" style="left:4.00px;top:254.45px;">LastError  00000000 (ERROR_SUCCESS)</span>
<span class="m" style="left:4.00px;top:264.52px;">LastStatus <span class="r">00000000 (STATUS_SUCCESS)</span></span>
<span class="m" style="left:4.00px;top:284.66px;">GS 002B  FS 0053</span>
<span class="m" style="left:4.00px;top:294.73px;">ES 002B  DS 002B</span>
<span class="m" style="left:4.00px;top:304.80px;">CS 0033  SS 002B</span>
</div>
<div style="left:727.80px;top:381.00px;width:241.20px;height:10.00px;background:#f0f0f0;"></div>
<div style="left:736.60px;top:386.00px;width:232.40px;height:0.90px;background:#8a8a8a;"></div>
<div style="left:726.80px;top:392.90px;width:243.00px;height:11.00px;background:#ffffff;border-top:1px solid #e0e0e0;box-sizing:border-box;"></div>
<span class="s" style="left:728.20px;top:392.60px;font-size:7.4px;color:#222">默认 <span class="ml">(x64 fastcall)</span></span>
<div style="left:726.80px;top:405.40px;width:243.00px;height:60.80px;background:#fff8f0;border-top:1px solid #707070;border-left:1px solid #c4c4c4;box-sizing:border-box;"></div>
<div style="left:726.30px;top:466.20px;width:243.00px;height:1.50px;background:#d2d2d2;"></div>
<div style="left:727.80px;top:406.20px;width:241.20px;height:9.60px;background:#c0c0c0;"></div>
<span class="m" style="left:729.60px;top:405.90px;">1: rcx 000000F788DC6000 000000F788DC6000</span>
<span class="m" style="left:729.60px;top:416.58px;">2: rdx 0000000140009CDC &lt;010editor.OptionalHeader.AddressOfEntryPoint&gt;</span>
<span class="m" style="left:729.60px;top:427.26px;">3: r8 000000F788DC6000 000000F788DC6000</span>
<span class="m" style="left:729.60px;top:437.94px;">4: r9 0000000140009CDC &lt;010editor.OptionalHeader.AddressOfEntryPoint&gt;</span>
<span class="m" style="left:729.60px;top:448.62px;">5: [rsp+28] 0000000000000000 0000000000000000</span>
<div style="left:726.30px;top:467.60px;width:243.00px;height:119.00px;background:#fff8f0;"></div>
<div style="left:811.20px;top:467.95px;width:158.00px;height:11.00px;background:#c0c0c0;"></div>
<div style="left:726.30px;top:467.75px;width:85.00px;height:11.30px;background:#000;"></div>
<div style="left:898.20px;top:467.60px;width:0.90px;height:119.00px;background:#b4b4b4;"></div>
<span class="s" style="left:868.00px;top:532.00px;font-size:39.5px;line-height:44px;height:44px;top:514px;color:rgba(130,120,110,0.11);font-weight:normal;letter-spacing:2px">看雪</span>
<span class="s" style="left:869.00px;top:532.00px;font-size:39.5px;line-height:44px;height:44px;top:513px;color:rgba(255,255,255,0.5);font-weight:normal;letter-spacing:2px">看雪</span>
<span class="m" style="left:728.60px;top:468.50px;color:#fffbf0">000000F788B6FD98</span>
<span class="m" style="left:817.60px;top:468.50px;">00007FFD030FE8D7</span>
<span class="m r" style="left:901.00px;top:468.50px;"><span class="s" style="font-size:9.7px;color:#f00;font-weight:normal;letter-spacing:0">返回到</span> kernel32.BaseThreadInitThunk+17</span>
<span class="m g" style="left:728.60px;top:479.20px;">000000F788B6FDA0</span>
<span class="m" style="left:817.60px;top:479.20px;">0000000000000000</span>
<span class="m g" style="left:728.60px;top:489.90px;">000000F788B6FDA8</span>
<span class="m" style="left:817.60px;top:489.90px;">0000000000000000</span>
<span class="m g" style="left:728.60px;top:500.60px;">000000F788B6FDB0</span>
<span class="m" style="left:817.60px;top:500.60px;">0000000000000000</span>
<span class="m g" style="left:728.60px;top:511.30px;">000000F788B6FDB8</span>
<span class="m" style="left:817.60px;top:511.30px;">0000000000000000</span>
<span class="m g" style="left:728.60px;top:522.00px;">000000F788B6FDC0</span>
<span class="m" style="left:817.60px;top:522.00px;">0000000000000000</span>
<span class="m g" style="left:728.60px;top:532.70px;">000000F788B6FDC8</span>
<span class="m" style="left:817.60px;top:532.70px;">00007FFD04A2C53C</span>
<span class="m r" style="left:901.00px;top:532.70px;"><span class="s" style="font-size:9.7px;color:#f00;font-weight:normal;letter-spacing:0">返回到</span> ntdll.RtlUserThreadStart+2C</span>
<span class="m g" style="left:728.60px;top:543.40px;">000000F788B6FDD0</span>
<span class="m" style="left:817.60px;top:543.40px;">0000000000000000</span>
<span class="m g" style="left:728.60px;top:554.10px;">000000F788B6FDD8</span>
<span class="m" style="left:817.60px;top:554.10px;">0000000000000000</span>
<span class="m g" style="left:728.60px;top:564.80px;">000000F788B6FDE0</span>
<span class="m" style="left:817.60px;top:564.80px;">000004F0FFFFFB30</span>
<span class="m g" style="left:728.60px;top:575.50px;">000000F788B6FDE8</span>
<span class="m" style="left:817.60px;top:575.50px;">000004D0FFFFFB30</span>
<span class="m g" style="left:728.60px;top:586.20px;">000000F788B6FDF0</span>
<span class="m" style="left:817.60px;top:586.20px;">0000000000000000</span>
<div style="left:813.00px;top:470.00px;width:1.50px;height:60.50px;background:#1a1aff;"></div>
<div style="left:813.00px;top:470.00px;width:3.20px;height:1.20px;background:#1a1aff;"></div>
<div style="left:813.00px;top:529.50px;width:3.20px;height:1.20px;background:#1a1aff;"></div>
<div style="left:813.00px;top:534.20px;width:1.50px;height:120.00px;background:#1a1aff;"></div>
<div style="left:813.00px;top:534.20px;width:3.20px;height:1.20px;background:#1a1aff;"></div>
</div></body></html>
